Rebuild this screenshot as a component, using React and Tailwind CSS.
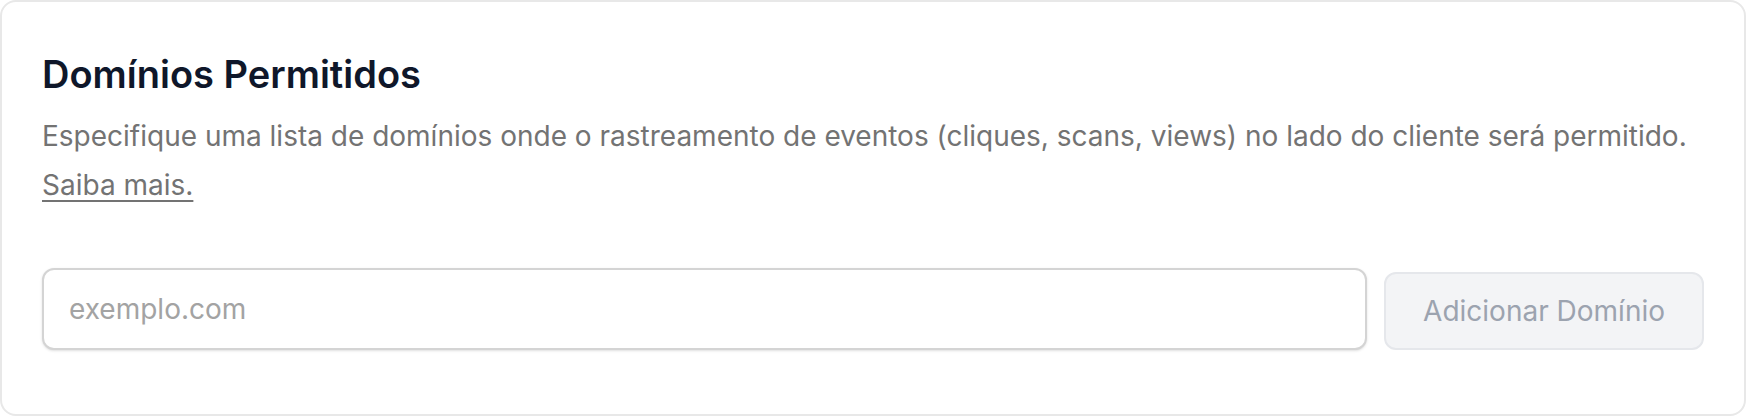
export default function App() {
  return (
    <div className="w-full h-[416px] bg-white" style={{ fontFamily: 'Inter, "Noto Sans", sans-serif' }}>
      <div className="h-[416px] rounded-[16px] border-2 border-[#e8e8e8] bg-white px-10 pt-[48px]">
        <h2 className="text-[38px] leading-[48px] font-semibold text-[#0f172a]">Domínios Permitidos</h2>
        <p className="mt-[14px] text-[28px] leading-[49px] text-[#737373]">
          Especifique uma lista de domínios onde o rastreamento de eventos (cliques, scans, views) no lado do cliente será permitido.{' '}
          <a href="#" className="underline underline-offset-[5px] decoration-[2px]">Saiba mais.</a>
        </p>
        <div className="mt-[58px] flex items-end gap-[17px]">
          <input
            type="text"
            placeholder="exemplo.com"
            className="flex-1 min-w-0 h-[82px] rounded-[12px] border-2 border-[#d4d4d4] bg-white px-[25px] text-[28px] text-[#111827] placeholder:text-[#a3a3a3] shadow-sm outline-none"
          />
          <button
            type="button"
            className="h-[78px] px-[37px] rounded-[12px] border-2 border-[#e5e7eb] bg-[#f3f4f6] text-[28px] text-[#9ca3af] whitespace-nowrap"
          >
            Adicionar Domínio
          </button>
        </div>
      </div>
    </div>
  );
}
